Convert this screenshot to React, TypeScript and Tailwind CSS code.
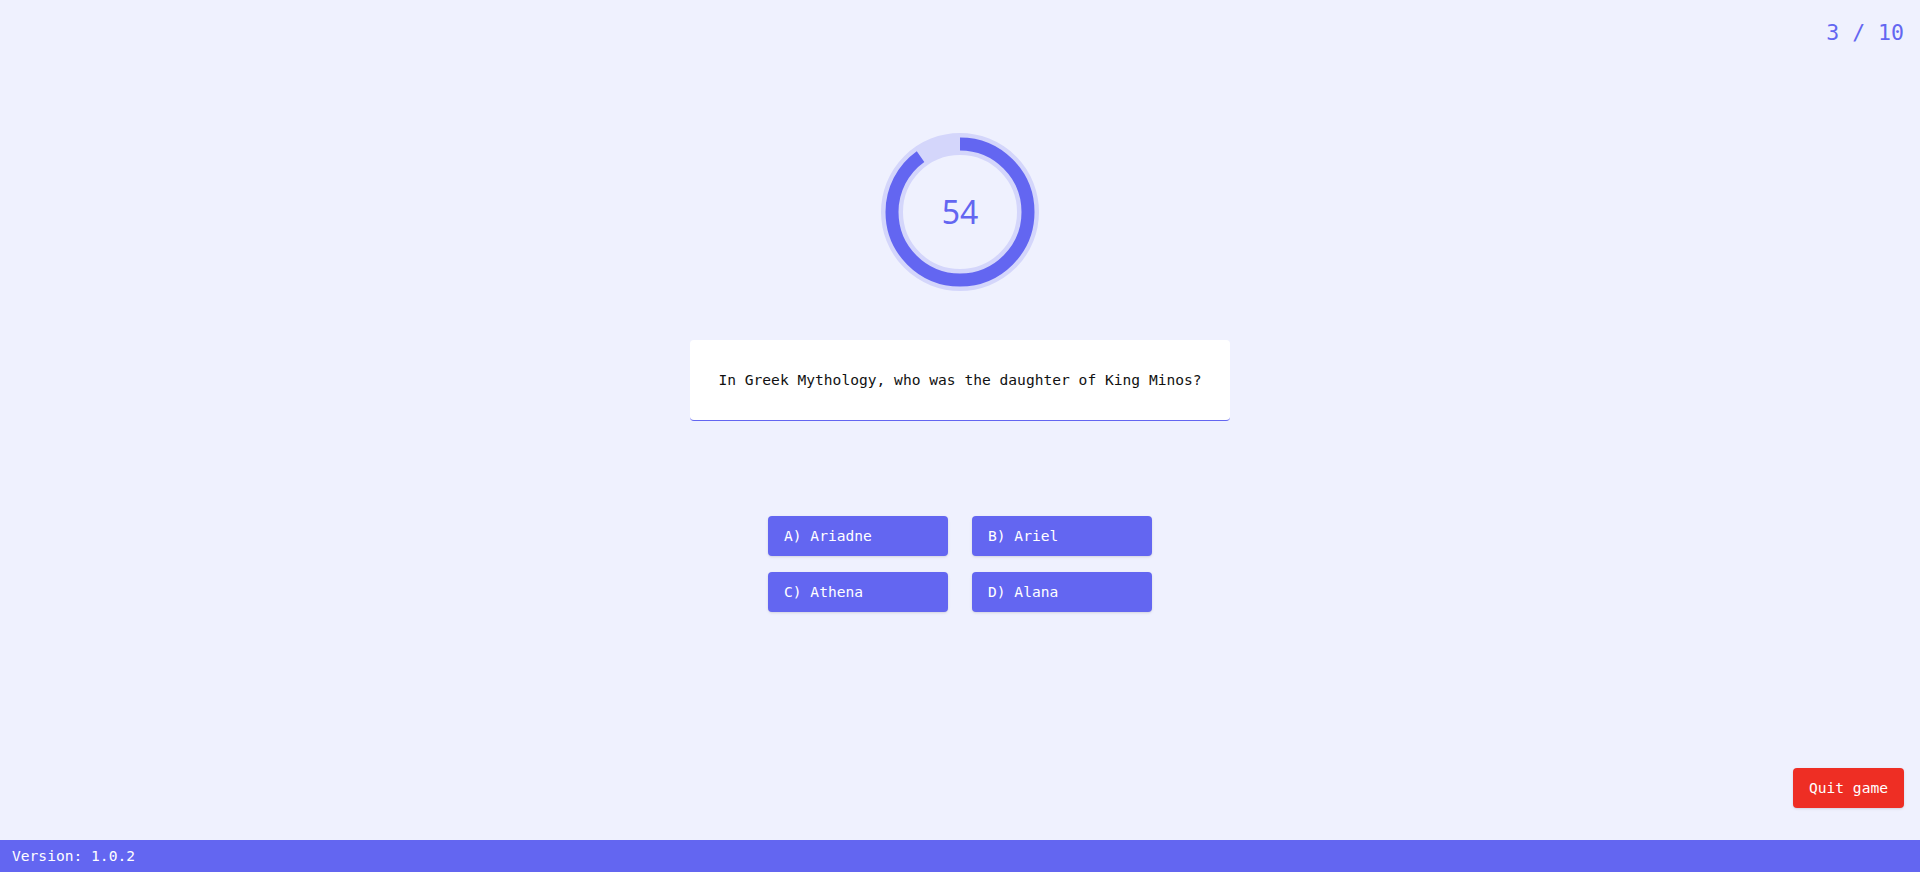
import React from 'react';

const mono = "font-['DejaVu_Sans_Mono','Liberation_Mono',monospace]";

const answers = ['A) Ariadne', 'B) Ariel', 'C) Athena', 'D) Alana'];

function Timer({ seconds, total }: { seconds: number; total: number }) {
  const r = 68;
  const c = 2 * Math.PI * r;
  const filled = (seconds / total) * c;
  return (
    <div className="relative w-[158px] h-[158px]">
      <svg width="158" height="158" viewBox="0 0 158 158" className="block">
        <circle cx="79" cy="79" r={r} fill="none" stroke="#d4d6fb" strokeWidth="22" />
        <circle
          cx="79"
          cy="79"
          r={r}
          fill="none"
          stroke="#6366f1"
          strokeWidth="13"
          strokeDasharray={`${filled} ${c}`}
          transform="rotate(-90 79 79)"
        />
      </svg>
      <div className="absolute inset-0 flex items-center justify-center font-['Noto_Sans',sans-serif] text-[32px] text-[#6366f1]">
        {seconds}
      </div>
    </div>
  );
}

export default function App() {
  return (
    <div className={`h-[872px] flex flex-col bg-[#eff1fe] ${mono}`}>
      <main className="flex-1 flex flex-col items-center">
        <div className="self-stretch flex justify-end px-4 pt-[19px] h-[47px]">
          <span className="text-[21.5px] leading-[28px] text-[#6366f1]">3 / 10</span>
        </div>
        <div className="mt-[86px]">
          <Timer seconds={54} total={60} />
        </div>
        <div className="mt-[49px] w-[540px] h-[81px] bg-white rounded border-b border-[#6366f1] flex items-center justify-center">
          <p className="text-[14.6px] text-[#111]">In Greek Mythology, who was the daughter of King Minos?</p>
        </div>
        <div className="mt-[95px] grid grid-cols-2 gap-x-6 gap-y-4">
          {answers.map((a) => (
            <button
              key={a}
              className="w-[180px] h-10 rounded bg-[#6366f1] text-white text-left pl-4 text-[14.6px] shadow-sm"
            >
              {a}
            </button>
          ))}
        </div>
        <button className="mt-auto mb-8 mr-4 self-end h-10 px-4 rounded bg-[#ee2e24] text-white text-[14.6px] shadow-sm">
          Quit game
        </button>
      </main>
      <footer className="h-8 bg-[#6366f1] flex items-center px-3 text-white text-[14.6px]">
        Version: 1.0.2
      </footer>
    </div>
  );
}
